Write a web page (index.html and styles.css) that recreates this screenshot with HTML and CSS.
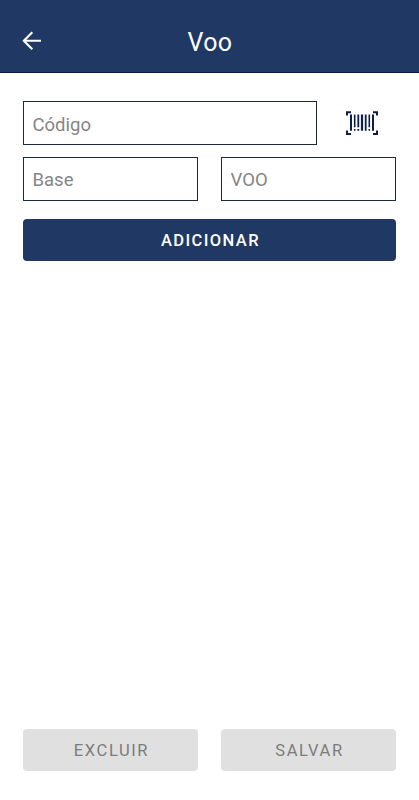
FILE: index.html
```html
<!DOCTYPE html>
<html lang="pt-BR">
<head>
<meta charset="utf-8">
<title>Voo</title>
<link rel="stylesheet" href="styles.css">
</head>
<body>
<header class="bar">
  <button class="back" aria-label="Voltar"><svg width="20" height="20" viewBox="0 0 20 20" fill="none" stroke="#fff" stroke-width="2.100"><path d="M19 9.700H2M10.300 1.300L1.800 9.700l8.500 8.500"/></svg></button>
  <h1 class="title">Voo</h1>
</header>
<main class="content">
  <form class="form">
    <div class="row code-row">
      <input class="field field-code" type="text" placeholder="Código">
      <button class="scan" type="button" aria-label="Ler código">
        <svg width="32" height="24" viewBox="0 0 32 24" fill="#0d1e48"><path d="M0 .2h5v2H2v2.300H0zM27 .2h5v4.300h-2V2.200h-3zM0 19.500h2V22h3v2H0zM30 19.500h2V24h-5v-2h3zM4 3.500h2v16.300H4zM7.900 3.500h1.600v12.800H7.900zM7.900 18h1.600v1.800H7.900zM11.400 3.500h1.800v12.800h-1.800zM11.400 18h1.800v1.800h-1.800zM14.900 3.500h2.200v16.300h-2.200zM18.800 3.500h1.800v16.300h-1.800zM22.500 3.500h1.600v12.800h-1.600zM22.500 18h1.600v1.800h-1.600zM26 3.500h2v16.300h-2z"/></svg>
      </button>
    </div>
    <div class="row">
      <input class="field" type="text" placeholder="Base">
      <input class="field" type="text" placeholder="VOO">
    </div>
    <button class="button primary" type="button">ADICIONAR</button>
  </form>
  <footer class="row">
    <button class="button" disabled>EXCLUIR</button>
    <button class="button" disabled>SALVAR</button>
  </footer>
</main>
</body>
</html>
```
FILE: styles.css
```css
* { box-sizing: border-box; }
body {
  margin: 0;
  height: 800px;
  display: flex;
  flex-direction: column;
  background: #fff;
  font-family: Roboto, sans-serif;
}
button { border: 0; padding: 0; background: none; font-family: inherit; }
.bar {
  height: 73px;
  padding: 9px 22px 0;
  display: grid;
  grid-template-columns: 20px 1fr 20px;
  align-items: center;
  background: #203864;
  border-bottom: 1px solid #0d1747;
}
.back { height: 20px; }
.back svg { display: block; }
.title {
  margin: 3px 0 0 1px;
  color: #fff;
  font-size: 25px;
  font-weight: 400;
  line-height: 31px;
  text-align: center;
  letter-spacing: 0.400px;
}
.content {
  flex: 1;
  padding: 28px 23px 29px;
  display: flex;
  flex-direction: column;
  justify-content: space-between;
}
.form { display: flex; flex-direction: column; gap: 12px; }
.row { display: flex; gap: 23px; }
.code-row { gap: 29px; align-items: center; }
.field {
  flex: 1;
  min-width: 0;
  height: 44px;
  padding: 2px 9px 0 8.500px;
  border: 1px solid #1c2740;
  border-radius: 0;
  background: #fff;
  font: 400 18.500px Roboto, sans-serif;
}
.field::placeholder { color: #858585; opacity: 1; }
.field-code { flex: 0 0 294px; padding-top: 3px; }
.scan { width: 32px; height: 24px; }
.scan svg { display: block; }
.button {
  flex: 1;
  height: 42px;
  padding: 1px 0 0 2px;
  border-radius: 4px;
  background: #e0e0e0;
  color: #7c7c7c;
  font-size: 16.500px;
  font-weight: 400;
  letter-spacing: 1.600px;
}
.primary {
  flex: none;
  margin-top: 6.400px;
  background: #203864;
  color: #fff;
  font-weight: 500;
  letter-spacing: 1.400px;
}
```
